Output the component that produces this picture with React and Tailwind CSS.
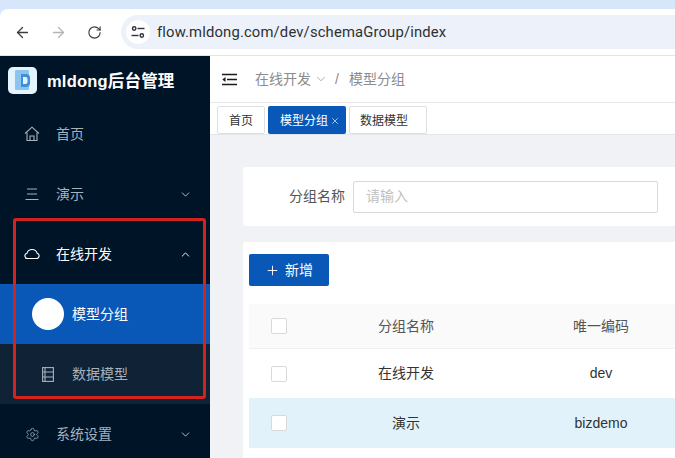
import React from "react";
import { ArrowLeft, ArrowRight, RotateCw, ChevronDown, ChevronUp, Plus, X, Settings } from "lucide-react";

const Tune = () => (
  <svg width="14" height="14" viewBox="0 0 14 14" fill="none" stroke="#2f3237" strokeWidth="1.4">
    <circle cx="3.2" cy="3.5" r="1.7" />
    <path d="M6.5 3.5H13.5" />
    <circle cx="10.8" cy="10.5" r="1.7" />
    <path d="M0.5 10.5H7.5" />
  </svg>
);

const Logo = () => (
  <div className="w-[29px] h-[27px] rounded-[5px] bg-[#e4f3fd] flex items-center justify-center">
    <svg width="20" height="22" viewBox="0 0 20 22">
      <rect x="2" y="1" width="14" height="20" rx="1" fill="#8cc4f0" />
      <path d="M8 5h5a4 4 0 0 1 4 4v5a4 4 0 0 1-4 4H8z" fill="#3f8fdc" />
      <path d="M10 8h2.5a2 2 0 0 1 2 2v3a2 2 0 0 1-2 2H10z" fill="#e4f3fd" />
    </svg>
  </div>
);

const HomeIcon = () => (
  <svg width="16" height="16" viewBox="0 0 16 16" fill="none" stroke="currentColor" strokeWidth="1.1">
    <path d="M1 7.5 8 1.2l7 6.3" />
    <path d="M3 6.5V14.5h10V6.5" />
    <path d="M6 14.5V10h4v4.5" />
  </svg>
);
const LinesIcon = () => (
  <svg width="16" height="16" viewBox="0 0 16 16" fill="none" stroke="currentColor" strokeWidth="1.1">
    <path d="M3 3h10M3 8h10M1.500 13.500h13" />
  </svg>
);
const CloudIcon = () => (
  <svg width="16" height="16" viewBox="0 0 16 16" fill="none" stroke="currentColor" strokeWidth="1.1">
    <path d="M4 12.500h8.500a2.700 2.700 0 0 0 .6-5.300A5.300 5.300 0 0 0 3 7.200a2.700 2.700 0 0 0 1 5.300z" />
  </svg>
);
const TableIcon = () => (
  <svg width="12" height="15" viewBox="0 0 12 15" fill="none" stroke="currentColor" strokeWidth="1.1">
    <rect x="0.600" y="0.600" width="10.800" height="13.800" />
    <path d="M0.600 5h10.800M0.600 10h10.800M3 0.600v13.800" />
  </svg>
);
const Collapse = () => (
  <svg width="15" height="13" viewBox="0 0 15 13" stroke="#1a1a1a" strokeWidth="1.400" fill="#1a1a1a">
    <path d="M0 1.500h15M5 6.500h10M0 11.500h15" fill="none" />
    <path d="M3.500 4v5L0.300 6.500z" stroke="none" />
  </svg>
);

const MenuRow = ({ icon, label, arrow, cls = "" }) => (
  <div className={`h-[60px] flex items-center pl-[24px] pr-[18px] text-[14px] text-[#a6b1bb] ${cls}`}>
    <span className="w-[16px] flex justify-center mr-[16px]">{icon}</span>
    <span className="flex-1">{label}</span>
    {arrow === "down" && <ChevronDown size={13} strokeWidth={1.700} className="text-[#c0c8d0]" />}
    {arrow === "up" && <ChevronUp size={13} strokeWidth={1.700} className="text-white" />}
  </div>
);

const Check = () => <span className="block w-[16px] h-[16px] rounded-[2px] border border-[#d9d9d9] bg-white" />;

const Row = ({ name, code, cls = "" }) => (
  <div className={`grid grid-cols-[60px_194px_196px] items-center text-[14px] text-[#333] ${cls}`}>
    <span className="pl-[22px]"><Check /></span>
    <span className="text-center">{name}</span>
    <span className="text-center">{code}</span>
  </div>
);

export default function App() {
  return (
    <div className="relative w-[675px] h-[458px] overflow-hidden bg-white font-['Liberation_Sans','Noto_Sans_CJK_SC',sans-serif]">
      <div className="h-[56px] bg-[#d8e6fb] pt-[9px]">
        <div className="h-[47px] bg-white rounded-tl-[8px] border-b border-[#e3e5e8] flex items-center pl-[14px]">
          <ArrowLeft size={17} strokeWidth={1.800} className="text-[#3b3d40]" />
          <ArrowRight size={17} strokeWidth={1.800} className="text-[#b3b5b8] ml-[19px]" />
          <RotateCw size={15} strokeWidth={1.800} className="text-[#3b3d40] ml-[20px]" />
          <div className="ml-[19px] flex-1 h-[34px] rounded-l-[17px] bg-[#edf1f9] flex items-center pl-[5px]">
            <span className="w-[24px] h-[24px] rounded-full bg-white flex items-center justify-center"><Tune /></span>
            <span className="ml-[7px] text-[14.800px] tracking-[0.160px] text-[#2e3134] font-['Roboto','Liberation_Sans',sans-serif]">flow.mldong.com/dev/schemaGroup/index</span>
          </div>
        </div>
      </div>

      <div className="flex h-[402px]">
        <aside className="w-[210px] shrink-0 bg-[#001428]">
          <div className="h-[48px] flex items-center pl-[8px]">
            <Logo />
            <span className="ml-[10px] mt-[3px] text-[16.500px] tracking-[0.200px] font-bold text-white">mldong后台管理</span>
          </div>
          <MenuRow icon={<HomeIcon />} label="首页" />
          <MenuRow icon={<LinesIcon />} label="演示" arrow="down" />
          <MenuRow cls="text-white" icon={<CloudIcon />} label="在线开发" arrow="up" />
          <div className="h-[60px] bg-[#0958b8] flex items-center pl-[32px] text-[14px] text-white">
            <span className="w-[32px] h-[32px] rounded-full bg-white mr-[8px]" />
            模型分组
          </div>
          <div className="h-[60px] bg-[#0f2236] flex items-center pl-[42px] text-[14px] text-[#a6b1bb]">
            <span className="mr-[18px] flex"><TableIcon /></span>
            数据模型
          </div>
          <MenuRow icon={<Settings size={15} strokeWidth={1.200} />} label="系统设置" arrow="down" />
        </aside>

        <main className="flex-1 min-w-0 bg-[#f0f2f5]">
          <div className="h-[47px] bg-white border-b border-[#e8e8e8] flex items-center pl-[12px] text-[14px] text-[#8c8c8c]">
            <Collapse />
            <span className="ml-[18px]">在线开发</span>
            <ChevronDown size={14} strokeWidth={1.200} className="ml-[3px]" />
            <span className="ml-[7px]">/</span>
            <span className="ml-[10px]">模型分组</span>
          </div>
          <div className="h-[32px] bg-white border-b border-[#e3e5e8] flex items-start gap-[3px] pl-[7px] pt-[3px] text-[12px]">
            <span className="w-[48px] h-[28px] pt-[2px] border border-[#dcdfe4] rounded-[2px] flex items-center justify-center text-[#333]">首页</span>
            <span className="w-[78px] h-[28px] pt-[2px] bg-[#0958b8] rounded-[2px] flex items-center pl-[12px] text-white">
              模型分组<X size={10} strokeWidth={1.500} className="ml-[2px]" />
            </span>
            <span className="w-[78px] h-[28px] pt-[2px] pl-[10px] border border-[#dcdfe4] rounded-[2px] flex items-center text-[#333]">数据模型</span>
          </div>

          <div className="pl-[33px] pt-[32px]">
            <div className="h-[59px] bg-white flex items-center rounded-l-[2px]">
              <span className="ml-[46px] text-[14px] text-[#555]">分组名称</span>
              <div className="ml-[8px] w-[305px] h-[32px] border border-[#d9d9d9] rounded-[2px] flex items-center pl-[12px] text-[14px] text-[#bfbfbf]">请输入</div>
            </div>
            <div className="mt-[16px] bg-white rounded-l-[2px] pl-[6px] pt-[12px] h-[300px]">
              <button className="w-[80px] h-[32px] rounded-[2px] bg-[#0958b8] text-white text-[14px] flex items-center justify-center gap-[5px]">
                <Plus size={15} strokeWidth={1.500} />新增
              </button>
              <div className="mt-[18px] w-[450px]">
                <Row cls="h-[45px] bg-[#fafafa] border-b border-[#f0f0f0] !text-[#555]" name="分组名称" code="唯一编码" />
                <Row cls="h-[49px]" name="在线开发" code="dev" />
                <Row cls="h-[50px] bg-[#e1f2fb]" name="演示" code="bizdemo" />
              </div>
            </div>
          </div>
        </main>
      </div>

      <div className="absolute left-[13px] top-[218px] w-[193px] h-[181px] border-[3px] border-[#d3231f] rounded-[3px] pointer-events-none" />
    </div>
  );
}
